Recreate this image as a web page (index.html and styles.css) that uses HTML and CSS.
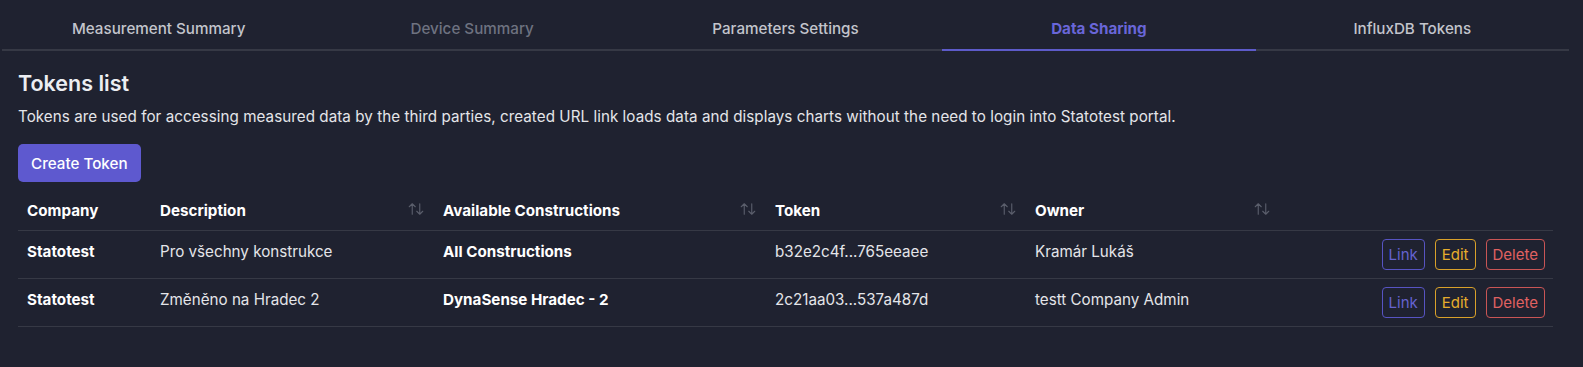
FILE: index.html
```html
<!DOCTYPE html>
<html lang="en">
  <head>
    <meta charset="UTF-8" />
    <meta name="viewport" content="width=device-width,initial-scale=1.0" />
    <title>Data Sharing</title>
    <link rel="stylesheet" href="styles.css">
  </head>
  <body>
    <div class="page">
      <nav class="tabs">
        <a class="tab" href="">Measurement Summary</a>
        <a class="tab disabled" href="">Device Summary</a>
        <a class="tab" href="">Parameters Settings</a>
        <a class="tab active" href="">Data Sharing</a>
        <a class="tab" href="">InfluxDB Tokens</a>
      </nav>

      <div class="panel">
        <h2 class="title">Tokens list</h2>
        <p class="info">Tokens are used for accessing measured data by the third parties, created URL link loads data and displays charts without the need to login into Statotest portal.</p>
        <button class="create-btn">Create Token</button>

        <table class="tokens">
          <colgroup>
            <col style="width: 133px" />
            <col style="width: 283px" />
            <col style="width: 332px" />
            <col style="width: 260px" />
            <col style="width: 254px" />
            <col />
          </colgroup>
          <thead>
            <tr>
              <th>Company</th>
              <th>
                <div class="th-sort">Description
                  <svg class="sort-icon" viewBox="0 0 24 24"><path d="M3 9l4 -4l4 4m-4 -4v14" /><path d="M21 15l-4 4l-4 -4m4 4v-14" /></svg>
                </div>
              </th>
              <th>
                <div class="th-sort">Available Constructions
                  <svg class="sort-icon" viewBox="0 0 24 24"><path d="M3 9l4 -4l4 4m-4 -4v14" /><path d="M21 15l-4 4l-4 -4m4 4v-14" /></svg>
                </div>
              </th>
              <th>
                <div class="th-sort">Token
                  <svg class="sort-icon" viewBox="0 0 24 24"><path d="M3 9l4 -4l4 4m-4 -4v14" /><path d="M21 15l-4 4l-4 -4m4 4v-14" /></svg>
                </div>
              </th>
              <th>
                <div class="th-sort">Owner
                  <svg class="sort-icon" viewBox="0 0 24 24"><path d="M3 9l4 -4l4 4m-4 -4v14" /><path d="M21 15l-4 4l-4 -4m4 4v-14" /></svg>
                </div>
              </th>
              <th></th>
            </tr>
          </thead>
          <tbody>
            <tr>
              <td class="strong">Statotest</td>
              <td>Pro všechny konstrukce</td>
              <td class="strong">All Constructions</td>
              <td>b32e2c4f...765eeaee</td>
              <td>Kramár Lukáš</td>
              <td class="actions">
                <div class="btns">
                  <button class="act link">Link</button>
                  <button class="act edit">Edit</button>
                  <button class="act delete">Delete</button>
                </div>
              </td>
            </tr>
            <tr>
              <td class="strong">Statotest</td>
              <td>Změněno na Hradec 2</td>
              <td class="strong">DynaSense Hradec - 2</td>
              <td>2c21aa03...537a487d</td>
              <td>testt Company Admin</td>
              <td class="actions">
                <div class="btns">
                  <button class="act link">Link</button>
                  <button class="act edit">Edit</button>
                  <button class="act delete">Delete</button>
                </div>
              </td>
            </tr>
          </tbody>
        </table>
      </div>
    </div>
  </body>
</html>
```

FILE: styles.css
```css
* {
  padding: 0;
  margin: 0;
  box-sizing: border-box;
  font-family: 'Inter', 'Noto Sans', sans-serif;
}
body {
  background-color: #1f2230;
  color: #e4e5e9;
  font-size: 15.2px;
}
.page {
  margin: 0 14px 0 2px;
}
a {
  text-decoration: none;
}

/* tabs */
.tabs {
  display: flex;
  border-bottom: 2px solid #363945;
}
.tab {
  flex: 1;
  text-align: center;
  padding: 20px 0 11px;
  line-height: 18px;
  font-size: 15.2px;
  font-weight: 500;
  color: #c3c5cc;
  border-bottom: 2px solid transparent;
  margin-bottom: -2px;
}
.tab.disabled {
  color: #6e7280;
}
.tab.active {
  color: #6966d8;
  font-weight: 700;
  border-bottom-color: #5d5bc9;
}

/* panel */
.panel {
  padding: 18px 16px 0;
}
.title {
  font-size: 21.5px;
  line-height: 28px;
  font-weight: 600;
  color: #eceef2;
}
.info {
  margin-top: 10px;
  line-height: 20px;
  color: #e4e5e9;
  letter-spacing: 0.05px;
}
.create-btn {
  margin-top: 17px;
  height: 38px;
  padding: 0 13px;
  border: none;
  border-radius: 5px;
  background-color: #5e59cf;
  color: #fff;
  font-size: 15.2px;
  font-weight: 500;
}

/* table */
.tokens {
  margin-top: 10px;
  width: 100%;
  border-collapse: collapse;
  table-layout: fixed;
}
.tokens th {
  text-align: left;
  padding: 10px 9px;
  line-height: 18px;
  font-weight: 700;
  color: #fff;
  border-bottom: 1px solid #363945;
}
.th-sort {
  display: flex;
  justify-content: space-between;
  align-items: center;
}
.sort-icon {
  width: 18px;
  height: 18px;
  margin-top: -5px;
  fill: none;
  stroke: #5a5e6b;
  stroke-width: 1.5;
  stroke-linecap: round;
  stroke-linejoin: round;
}
.tokens td {
  vertical-align: top;
  padding: 11px 9px 0;
  line-height: 20px;
  color: #e4e5e9;
  border-bottom: 1px solid #363945;
}
.tokens td.strong {
  font-weight: 700;
  color: #fff;
}
.tokens td.actions {
  padding: 8px 8px 8px 0;
}
.btns {
  display: flex;
  justify-content: flex-end;
  gap: 10px;
}
.act {
  height: 31px;
  padding: 0 6px;
  background: transparent;
  border: 1px solid;
  border-radius: 4px;
  font-size: 15px;
}
.act.link {
  color: #6562cf;
  border-color: #5754c2;
}
.act.edit {
  color: #e6ad2c;
  border-color: #d9a12a;
}
.act.delete {
  color: #e06161;
  border-color: #c95555;
}
```
